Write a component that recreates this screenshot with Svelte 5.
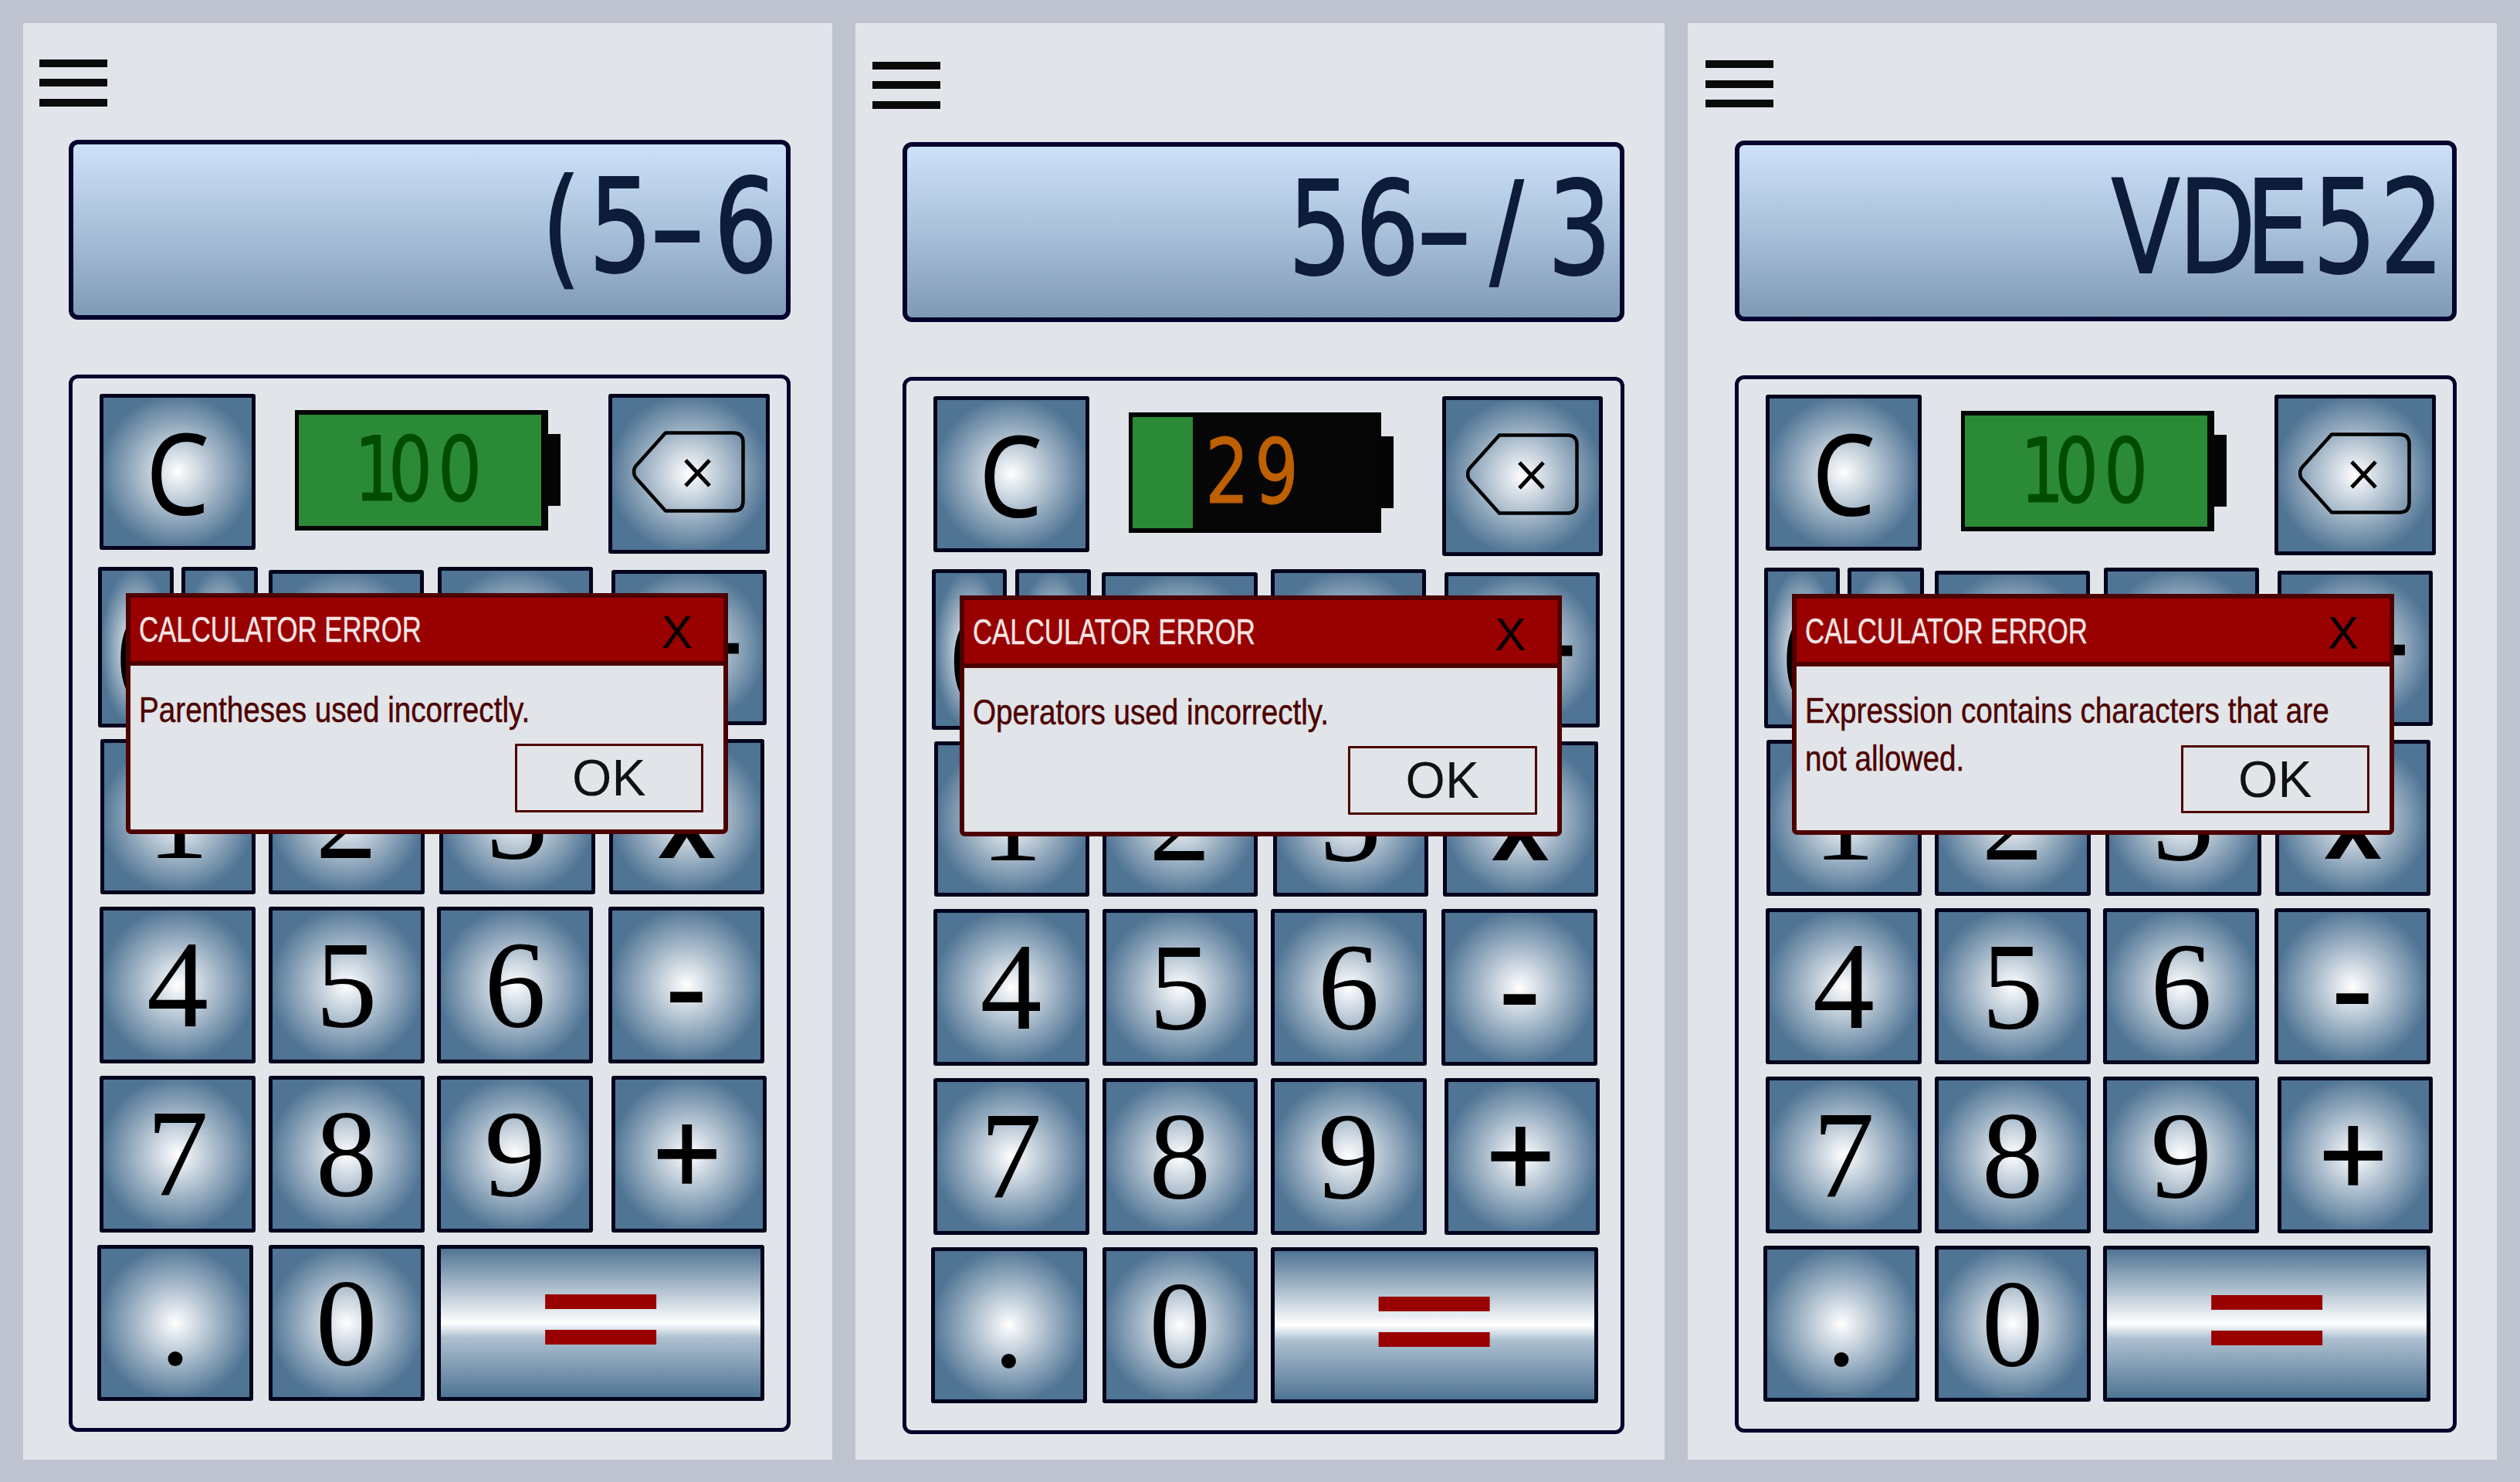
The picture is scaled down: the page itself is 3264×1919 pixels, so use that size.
<script>
  const rows = [
    {
      h: 207,
      keys: [
        { t: "(", x: 127, r: 224.6, h: 208 },
        { t: ")", x: 235.5, r: 333.6, h: 208 },
        { t: "X", sup: "Y", x: 348, r: 549.5, top: 4, h: 201 },
        { t: "%", x: 567, r: 767.6, h: 205 },
        { t: "÷", x: 792, r: 992.6, top: 4, h: 201, cls: "wide-op" }
      ]
    },
    {
      h: 201.5,
      keys: [
        { t: "1", x: 130, r: 331 },
        { t: "2", x: 348, r: 549.5 },
        { t: "3", x: 569, r: 770.5 },
        { t: "x", x: 789, r: 990, cls: "times" }
      ]
    },
    {
      h: 202.5,
      keys: [
        { t: "4", x: 129, r: 331 },
        { t: "5", x: 348, r: 549.5 },
        { t: "6", x: 566, r: 768.4 },
        { t: "-", x: 788, r: 990, cls: "op" }
      ]
    },
    {
      h: 203,
      keys: [
        { t: "7", x: 129, r: 331 },
        { t: "8", x: 348, r: 549.5 },
        { t: "9", x: 566, r: 768.4 },
        { t: "+", x: 791.6, r: 993, cls: "op plus" }
      ]
    },
    {
      h: 202,
      keys: [
        { t: ".", x: 126, r: 328 },
        { t: "0", x: 348, r: 549.5 },
        { t: "=", x: 566, r: 990, cls: "equals" }
      ]
    }
  ];

  const calculators = [
    { expr: "(5-6", battery: 100, fill: 100, level: "full", msg: "Parentheses used incorrectly.", dx: 0, dy: 0 },
    { expr: "56-/3", battery: 29, fill: 25, level: "low", msg: "Operators used incorrectly.", dx: 1.5, dy: 3 },
    { expr: "VDE52", battery: 100, fill: 100, level: "full", msg: "Expression contains characters that are not allowed.", dx: 2, dy: 1.5 }
  ];

  // the lcd font is not monospaced: these chars get a narrower cell
  const exprCells = { "(": 58, "-": 75 };
  const batteryCells = { "1": 42 };

  function offset(keys, i) {
    return i === 0 ? keys[0].x - 129 : keys[i].x - keys[i - 1].r;
  }
</script>

{#snippet lcd(text, cells, base)}
  {#each String(text).split("") as ch}
    <span class="seg" class:dash={ch === "-"} style="width: {cells[ch] ?? base}px">{ch}</span>
  {/each}
{/snippet}

<div class="page">
  {#each calculators as calc}
    <section class="panel">
      <div class="inner" style="padding: {calc.dy}px 0 0 {calc.dx}px">
        <div class="menu">
          <span></span>
          <span></span>
          <span></span>
        </div>

        <div class="display">{@render lcd(calc.expr, exprCells, 87)}</div>

        <div class="keypad">
          <div class="row first">
            <button class="key clear"><span>C</span></button>
            <div class="battery {calc.level}">
              <div class="charge" style="width: {calc.fill}%"></div>
              <div class="percent">{@render lcd(calc.battery, batteryCells, 64)}</div>
            </div>
            <button class="key back" aria-label="Backspace">
              <svg width="146" height="106" viewBox="0 0 146 106" fill="none" stroke="#000" stroke-width="4.5">
                <path d="M43 2.5H131Q143.5 2.5 143.5 15V91Q143.5 103.5 131 103.5H43L4 60Q0 53 4 46Z" stroke-linejoin="round" />
                <path d="M69 38L100 71M100 38L69 71" stroke-width="5" />
              </svg>
            </button>
          </div>

          {#each rows as row}
            <div class="row" style="height: {row.h}px">
              {#each row.keys as key, i}
                <button
                  class="key num {key.cls ?? ''}"
                  style="width: {key.r - key.x}px; margin-left: {offset(row.keys, i)}px; margin-top: {key.top ?? 0}px; height: {key.h ?? row.h}px"
                >
                  {key.t}{#if key.sup}<sup>{key.sup}</sup>{/if}
                </button>
              {/each}
            </div>
          {/each}

          <div class="dialog">
            <header>
              <span class="title">CALCULATOR ERROR</span>
              <span class="close">X</span>
            </header>
            <div class="body">
              <p>{calc.msg}</p>
              <button class="ok">OK</button>
            </div>
          </div>
        </div>
      </div>
    </section>
  {/each}
</div>

<style>
  :global(body) {
    margin: 0;
    background: #bfc3cf;
  }

  .page {
    display: grid;
    grid-template-columns: repeat(3, 1048px);
    gap: 30px;
    padding: 30px;
    width: 3264px;
    height: 1919px;
    box-sizing: border-box;
  }

  .panel {
    background: #e1e5e9;
    height: 1860px;
  }

  .menu {
    display: flex;
    flex-direction: column;
    gap: 15.5px;
    width: 88px;
    margin: 46.5px 0 0 20.5px;
  }

  .menu span {
    height: 10px;
    background: #0a0a0a;
  }

  .display {
    display: flex;
    justify-content: flex-end;
    align-items: center;
    box-sizing: border-box;
    width: 935px;
    height: 233.5px;
    margin: 43px 0 0 59px;
    padding: 0 16px 6px 0;
    border: 6px solid #03032e;
    border-radius: 12px;
    background: linear-gradient(#cde1f8, #a9c0da 50%, #7f9ab5);
    color: #0d1c3a;
    font: 167px/1 "DejaVu Sans", sans-serif;
    -webkit-text-stroke: 2px #0d1c3a;
  }

  .seg {
    display: inline-block;
    text-align: center;
    transform: scaleX(0.78);
  }

  .seg.dash {
    transform: scaleX(1.25);
  }

  .keypad {
    position: relative;
    display: flex;
    flex-direction: column;
    gap: 16px;
    box-sizing: border-box;
    width: 935px;
    height: 1369px;
    margin: 70.5px 0 0 59px;
    padding: 20px 0 0 35px;
    border: 5px solid #03032e;
    border-radius: 12px;
  }

  .row {
    display: flex;
    align-items: flex-start;
  }

  .row.first {
    height: 208px;
  }

  .key {
    box-sizing: border-box;
    display: flex;
    align-items: center;
    justify-content: center;
    height: 202px;
    padding: 0;
    border: 5.5px solid #03031c;
    border-radius: 3px;
    background: radial-gradient(#fff, #4f7494 74%);
    color: #000;
    font: 160px/1 "Liberation Serif", serif;
  }

  .key sup {
    font-size: 80px;
    line-height: 0;
    vertical-align: 81px;
  }

  .clear {
    width: 202px;
    font: 400 146px/1 "Noto Sans", sans-serif;
  }

  .clear span {
    display: block;
    transform: scaleX(0.9);
  }

  .back {
    width: 208.5px;
    height: 207.5px;
    margin-left: 78.5px;
    padding-bottom: 4px;
  }

  .battery {
    position: relative;
    display: flex;
    align-items: center;
    justify-content: center;
    box-sizing: border-box;
    width: 327.5px;
    height: 156px;
    margin: 21px 0 0 51px;
    padding-right: 10px;
    background: #060606;
    border: solid #050505;
    border-width: 6px 9px 6px 5.5px;
  }

  .battery::after {
    content: "";
    position: absolute;
    top: 25px;
    right: -25px;
    width: 16px;
    height: 93px;
    background: #050505;
  }

  .charge {
    position: absolute;
    left: 0;
    top: 0;
    bottom: 0;
    background: #2b8a36;
  }

  .percent {
    position: relative;
    display: flex;
    font: 115px/1 "DejaVu Sans", sans-serif;
  }

  .full .percent {
    color: #004d00;
    -webkit-text-stroke: 1px #004d00;
  }

  .low .percent {
    color: #bf6000;
    -webkit-text-stroke: 1px #bf6000;
  }

  .op {
    font-weight: bold;
  }

  .plus {
    padding-right: 5px;
    -webkit-text-stroke: 1.5px #000;
  }

  .equals {
    padding-bottom: 22px;
    color: #990000;
    font: 230px/1 "DejaVu Sans", sans-serif;
    background: linear-gradient(#4f7494, #fff 50%, #c6d4df 57%, #adc0d0 60%, #4f7494);
  }

  .wide-op {
    font-size: 278px;
  }

  .times {
    padding-top: 4px;
    font: 600 135px/1 "Noto Sans", sans-serif;
  }

  .dialog {
    position: absolute;
    left: 69px;
    top: 278px;
    box-sizing: border-box;
    width: 780px;
    height: 312px;
    display: flex;
    flex-direction: column;
    border: 6px solid #4d0000;
    border-radius: 0 0 7px 7px;
    background: #e1e5e9;
    font-family: "Liberation Sans", sans-serif;
  }

  .dialog header {
    display: flex;
    justify-content: space-between;
    align-items: center;
    height: 88px;
    box-sizing: border-box;
    padding: 0 40px 0 11px;
    background: #990000;
    border-bottom: 6px solid #4d0000;
  }

  .title {
    color: #f8e6e6;
    font-size: 47px;
    transform: scaleX(0.74);
    transform-origin: left;
    white-space: nowrap;
    -webkit-text-stroke: 0.4px #f8e6e6;
  }

  .close {
    color: #000;
    font: 60px/1 "Liberation Sans", sans-serif;
    padding-top: 8px;
  }

  .body {
    flex: 1;
    display: grid;
    grid-template-columns: minmax(0, 1fr);
    padding: 26px 26px 22px 11px;
  }

  .body p,
  .ok {
    grid-area: 1 / 1;
  }

  .body p {
    width: 830px;
    margin: 0;
    color: #4d0000;
    font-size: 46px;
    line-height: 62px;
    transform: scaleX(0.84);
    transform-origin: left;
    -webkit-text-stroke: 0.5px #4d0000;
  }

  .ok {
    justify-self: end;
    align-self: end;
    width: 244.5px;
    height: 88.5px;
    padding: 0;
    background: #e1e5e9;
    border: 3px solid #4d0000;
    border-radius: 1px;
    color: #111;
    font: 66px/1 "Liberation Sans", sans-serif;
  }
</style>
